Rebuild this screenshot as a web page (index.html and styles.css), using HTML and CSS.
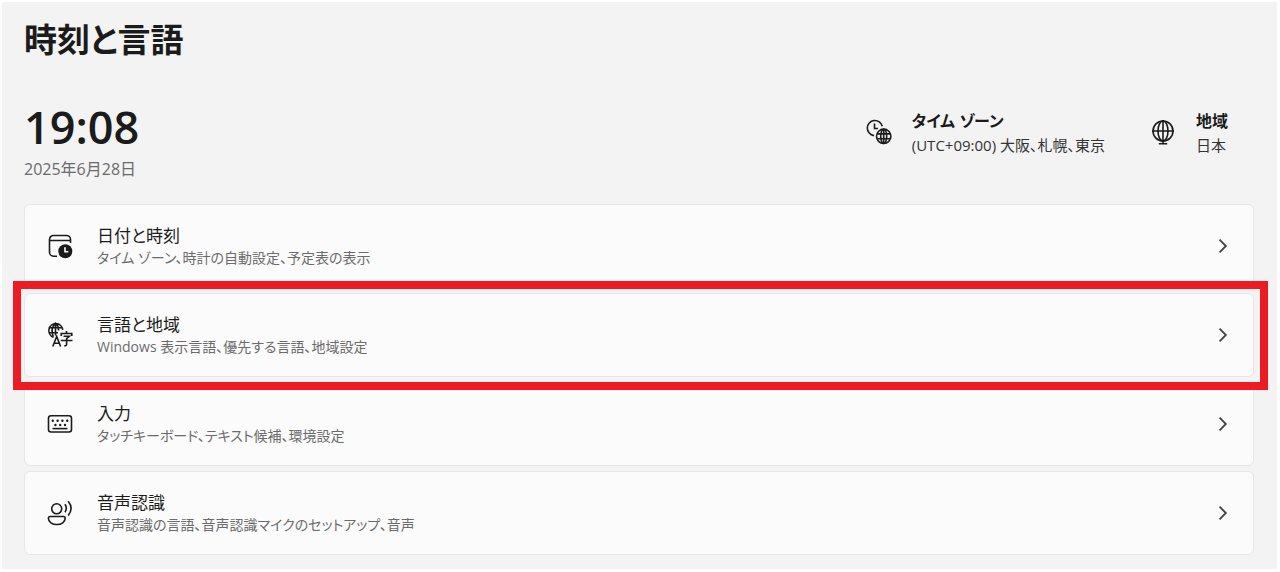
FILE: index.html
```html
<!DOCTYPE html>
<html lang="ja">
<head>
<meta charset="utf-8">
<meta name="viewport" content="width=device-width, initial-scale=1">
<title>時刻と言語</title>
<link rel="stylesheet" href="styles.css">
</head>
<body>
<main class="page">
  <h1 class="page-title">時刻と言語</h1>

  <section class="summary">
    <div class="now">
      <time class="clock">19:08</time>
      <p class="date">2025年6月28日</p>
    </div>
    <div class="facts">
      <div class="fact">
        <svg class="icon" viewBox="0 0 26 26" aria-hidden="true">
          <path d="M8 16.6A7.6 7.6 0 1 1 16.3 7.3"/>
          <path d="M8.5 4.5V9.5H12"/>
          <circle cx="17.7" cy="17.3" r="7.2"/>
          <ellipse cx="17.7" cy="17.3" rx="3" ry="7.2"/>
          <path d="M11.2 14.9H24.2M11.2 19.7H24.2M17.7 10.1V24.5"/>
        </svg>
        <div class="fact-text">
          <h2 class="fact-title">タイム ゾーン</h2>
          <p class="fact-value">(UTC+09:00) 大阪、札幌、東京</p>
        </div>
      </div>
      <div class="fact">
        <svg class="icon" viewBox="0 0 26 26" aria-hidden="true">
          <circle cx="13" cy="12" r="10"/>
          <ellipse cx="13" cy="12" rx="5" ry="10"/>
          <path d="M2 12H24M13 1V25M8.8 24.7H17.2"/>
        </svg>
        <div class="fact-text">
          <h2 class="fact-title">地域</h2>
          <p class="fact-value">日本</p>
        </div>
      </div>
    </div>
  </section>

  <nav class="cards">
    <a class="card" href="#date">
      <svg class="icon" viewBox="0 0 26 26" aria-hidden="true">
        <path d="M10 23.2H6.5A4 4 0 0 1 2.5 19.2V6.5A4 4 0 0 1 6.5 2.5H19.5A4 4 0 0 1 23.5 6.5V10M2.5 7.5H23.5"/>
        <circle class="solid" cx="18.3" cy="18.3" r="7"/>
        <path class="knockout" d="M18 14.3V18.8H21.3"/>
      </svg>
      <span class="card-text">
        <span class="card-title">日付と時刻</span>
        <span class="card-note">タイム ゾーン、時計の自動設定、予定表の表示</span>
      </span>
      <svg class="chevron" viewBox="0 0 14 14" aria-hidden="true"><path d="M4 1.5L9.5 7L4 12.5"/></svg>
    </a>
    <a class="card card-marked" href="#language">
      <svg class="icon" viewBox="0 0 26 26" aria-hidden="true">
        <path d="M6.5 15.2A7 7 0 1 1 15.8 7.8M1.6 5.8H15M1.6 10.8H11M8.5 1V13.5M6.2 14.5C4.4 10 4.4 5 8.5 1.2C11 3.5 11.7 6 11.6 8.5"/>
        <path d="M5.8 24.5L9.7 14.5L13.6 24.5M7.2 21.3H12.2"/>
        <path d="M19.5 9V11.3M14.2 14V11.5H24.8V14M16.5 14.3H22.3L19.6 16.6V22.5Q19.6 24 17.2 23.7M13.7 18.5H25.5"/>
      </svg>
      <span class="card-text">
        <span class="card-title">言語と地域</span>
        <span class="card-note">Windows 表示言語、優先する言語、地域設定</span>
      </span>
      <svg class="chevron" viewBox="0 0 14 14" aria-hidden="true"><path d="M4 1.5L9.5 7L4 12.5"/></svg>
    </a>
    <a class="card" href="#typing">
      <svg class="icon" viewBox="0 0 26 26" aria-hidden="true">
        <rect x="1.5" y="4.8" width="23" height="16.2" rx="2.5"/>
        <g class="solid">
          <circle cx="5.8" cy="9.8" r="1.2"/><circle cx="10.6" cy="9.8" r="1.2"/><circle cx="15.4" cy="9.8" r="1.2"/><circle cx="20.2" cy="9.8" r="1.2"/>
          <circle cx="8.4" cy="14" r="1.2"/><circle cx="13.2" cy="14" r="1.2"/><circle cx="18" cy="14" r="1.2"/>
        </g>
        <path d="M5.5 17.6H20.5"/>
      </svg>
      <span class="card-text">
        <span class="card-title">入力</span>
        <span class="card-note">タッチキーボード、テキスト候補、環境設定</span>
      </span>
      <svg class="chevron" viewBox="0 0 14 14" aria-hidden="true"><path d="M4 1.5L9.5 7L4 12.5"/></svg>
    </a>
    <a class="card" href="#speech">
      <svg class="icon" viewBox="0 0 26 26" aria-hidden="true">
        <circle cx="9.7" cy="8.8" r="5"/>
        <path d="M3.2 16.5H16.4A1.8 1.8 0 0 1 18.2 18.3C18.2 22 14.5 24.5 9.8 24.5S1.4 22 1.4 18.3A1.8 1.8 0 0 1 3.2 16.5Z"/>
        <path d="M18 4.3Q20.6 8.3 18 12.3M21.2 1.2Q27 8.3 21.2 15.4"/>
      </svg>
      <span class="card-text">
        <span class="card-title">音声認識</span>
        <span class="card-note">音声認識の言語、音声認識マイクのセットアップ、音声</span>
      </span>
      <svg class="chevron" viewBox="0 0 14 14" aria-hidden="true"><path d="M4 1.5L9.5 7L4 12.5"/></svg>
    </a>
  </nav>
</main>
</body>
</html>
```

FILE: styles.css
```css
* {
  box-sizing: border-box;
}

body {
  margin: 0;
  background: #fff;
  color: #1b1b1b;
  font-family: "Open Sans", "Noto Sans CJK JP", sans-serif;
  font-feature-settings: "palt";
}

h1, h2, p {
  margin: 0;
}

.page {
  margin: 2px 3px 3px 2px;
  padding: 14px 23px 14px 22px;
  background: #f3f3f3;
}

.page-title {
  font-size: 33px;
  font-weight: 600;
  line-height: 48px;
}

.summary {
  display: flex;
  justify-content: space-between;
  padding: 36px 26px 20px 0;
}

.clock {
  display: block;
  font-size: 45px;
  font-weight: 600;
  line-height: 54px;
}

.date {
  color: #6b6b6b;
  font-size: 16px;
  line-height: 30px;
}

.facts {
  display: flex;
  gap: 45px;
  padding-top: 9px;
}

.fact {
  display: flex;
  gap: 20px;
}

.fact .icon {
  margin-top: 10px;
}

.fact-title {
  font-size: 16px;
  font-weight: 600;
  line-height: 24px;
}

.fact-value {
  color: #333;
  font-size: 15px;
  line-height: 24px;
}

.icon,
.chevron {
  flex: none;
  fill: none;
  stroke: #1b1b1b;
  stroke-width: 1.6;
}

.icon {
  width: 26px;
  height: 26px;
}

.icon .solid {
  fill: #1b1b1b;
  stroke: none;
}

.icon .knockout {
  stroke: #fff;
}

.cards {
  display: grid;
  gap: 5px;
}

.card {
  position: relative;
  display: flex;
  align-items: center;
  gap: 24px;
  min-height: 84px;
  padding: 0 22px;
  border: 1px solid #e6e6e6;
  border-radius: 6px;
  background: #fbfbfb;
  color: inherit;
  text-decoration: none;
}

.card-marked::after {
  content: "";
  position: absolute;
  z-index: 1;
  inset: -13px -15px -14px -12px;
  border: 8px solid #ed1c24;
  pointer-events: none;
}

.card-text {
  display: flex;
  flex: 1;
  flex-direction: column;
  padding-top: 2px;
}

.card-title {
  font-size: 17px;
  line-height: 22px;
}

.card-note {
  color: #6b6b6b;
  font-size: 14px;
  line-height: 22px;
}

.chevron {
  width: 16px;
  height: 16px;
  stroke: #444;
}
```
